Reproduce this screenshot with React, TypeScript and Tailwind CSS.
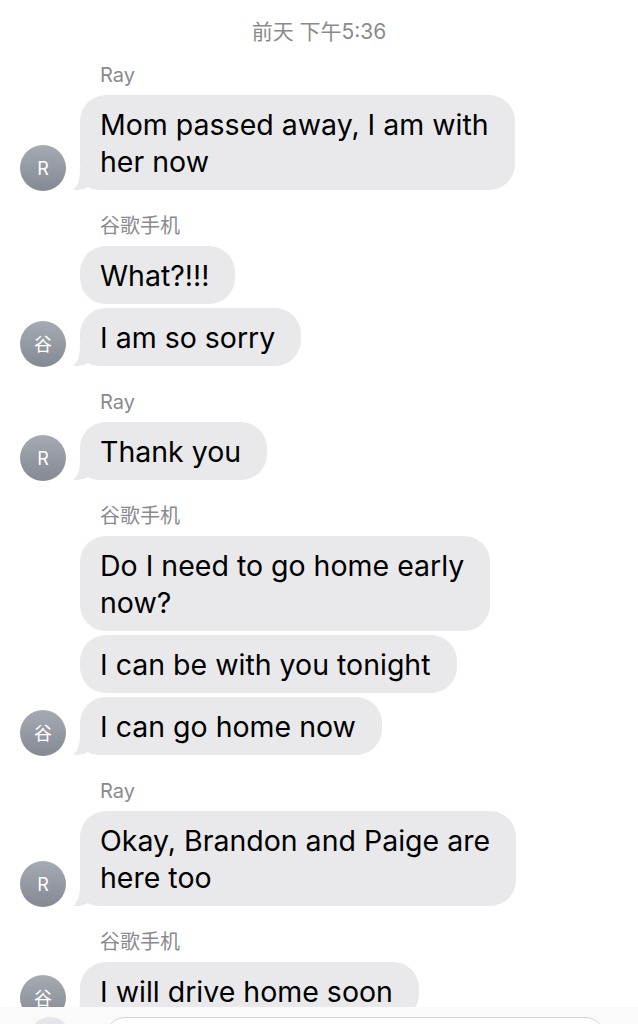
import React from "react";

type Group = { sender: string; avatar: string; messages: string[] };

const groups: Group[] = [
  { sender: "Ray", avatar: "R", messages: ["Mom passed away, I am with\nher now"] },
  { sender: "谷歌手机", avatar: "谷", messages: ["What?!!!", "I am so sorry"] },
  { sender: "Ray", avatar: "R", messages: ["Thank you"] },
  {
    sender: "谷歌手机",
    avatar: "谷",
    messages: ["Do I need to go home early\nnow?", "I can be with you tonight", "I can go home now"],
  },
  { sender: "Ray", avatar: "R", messages: ["Okay, Brandon and Paige are\nhere too"] },
  { sender: "谷歌手机", avatar: "谷", messages: ["I will drive home soon"] },
];

const FONT = { fontFamily: 'Inter, "Noto Sans CJK SC", sans-serif' };

function Tail() {
  return (
    <svg
      className="absolute left-[-7px] bottom-0"
      width="34"
      height="22"
      viewBox="0 0 34 22"
    >
      <path
        d="M7 0 C7 12 5 18 0 22 C6 22.5 11 21 15 19 C18 21 22 22 28 22 L34 22 L34 0 Z"
        fill="#e9e9eb"
      />
    </svg>
  );
}

function Avatar({ ch }: { ch: string }) {
  return (
    <div className="w-[46px] h-[46px] rounded-full bg-gradient-to-b from-[#a6aab3] to-[#858993] flex items-center justify-center text-white text-[18px] mb-[-1px]">
      {ch}
    </div>
  );
}

export default function App() {
  return (
    <div
      className="relative w-[638px] h-[1024px] overflow-hidden bg-white"
      style={FONT}
    >
      <div className="pt-[20px] text-center text-[21px] leading-[24px] text-[#8a8a8e]">
        前天 下午5:36
      </div>
      <div className="flex flex-col gap-[24px] pt-[19px]">
        {groups.map((g, gi) => (
          <div key={gi} className="flex flex-col">
            <div className="pl-[100px] text-[20px] leading-[24px] text-[#8a8a8e] mb-[8px]">
              {g.sender}
            </div>
            <div className="flex flex-col gap-[4px]">
              {g.messages.map((m, mi) => {
                const last = mi === g.messages.length - 1;
                return (
                  <div key={mi} className="flex items-end">
                    <div className="w-[80px] pl-[20px] flex items-end">
                      {last && <Avatar ch={g.avatar} />}
                    </div>
                    <div className="relative">
                      {last && <Tail />}
                      <div className="relative bg-[#e9e9eb] rounded-[26px] pl-[20px] pr-[26px] py-[10.5px] text-[28.5px] leading-[37px] text-black whitespace-pre">
                        {m}
                      </div>
                    </div>
                  </div>
                );
              })}
            </div>
          </div>
        ))}
      </div>
      <div className="absolute left-0 right-0 bottom-0 h-[17px] bg-[#fafafa] flex items-start pt-[10px]">
        <div className="ml-[30px] w-[40px] h-[40px] rounded-full bg-[#e6e6ea]" />
        <div className="ml-[35px] w-[500px] h-[40px] rounded-[20px] border border-[#d4d4d8] bg-white" />
      </div>
    </div>
  );
}
